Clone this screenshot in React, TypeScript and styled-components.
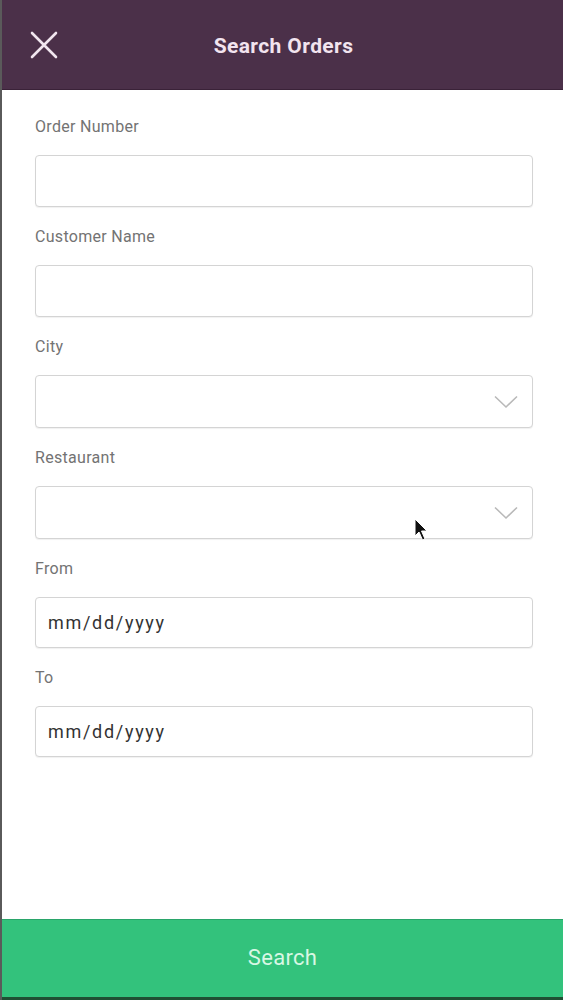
import { createGlobalStyle, styled } from "styled-components";

const GlobalStyle = createGlobalStyle`
  html, body {
    margin: 0;
    padding: 0;
    background: #ffffff;
  }
  body {
    font-family: Roboto, "Noto Sans", Arial, sans-serif;
  }
`;

type Kind = "text" | "select" | "date";

const fields: { label: string; kind: Kind }[] = [
  { label: "Order Number", kind: "text" },
  { label: "Customer Name", kind: "text" },
  { label: "City", kind: "select" },
  { label: "Restaurant", kind: "select" },
  { label: "From", kind: "date" },
  { label: "To", kind: "date" },
];

const boxHeight: Record<Kind, number> = { text: 52, select: 53, date: 51 };

const CloseIcon = () => (
  <svg width="28" height="28" viewBox="0 0 28 28">
    <path d="M2 2 L26 26 M26 2 L2 26" stroke="#f1e6ef" strokeWidth="2.6" strokeLinecap="round" />
  </svg>
);

const Chevron = () => (
  <svg width="24" height="14" viewBox="0 0 24 14">
    <path d="M1 1.5 L12 12 L23 1.5" fill="none" stroke="#b9b9b9" strokeWidth="1.6" />
  </svg>
);

const Pointer = () => (
  <svg width="16" height="24" viewBox="0 0 16 24">
    <path d="M1 1 L1 18 L5 14 L8.5 22 L11 21 L7.5 13 L13 13 Z" fill="#111" stroke="#fff" strokeWidth="1" />
  </svg>
);

const App = () => {
  return (
    <>
      <GlobalStyle />
      <Page>
        <Header>
          <CloseButton>
            <CloseIcon />
          </CloseButton>
          <Title>Search Orders</Title>
        </Header>
        <Form>
          {fields.map((f) => (
            <Field key={f.label}>
              <Label>{f.label}</Label>
              <Box $h={boxHeight[f.kind]}>
                {f.kind === "date" && <DateText>mm/dd/yyyy</DateText>}
                {f.kind === "select" && <Chevron />}
                {f.label === "Restaurant" && (
                  <Cursor>
                    <Pointer />
                  </Cursor>
                )}
              </Box>
            </Field>
          ))}
        </Form>
        <SearchButton>Search</SearchButton>
      </Page>
    </>
  );
};

const Page = styled.div`
  min-height: 100vh;
  display: flex;
  flex-direction: column;
  border-left: 2px solid #5a5a5a;
  box-sizing: border-box;
`;

const Header = styled.div`
  height: 90px;
  background: #4b3049;
  display: flex;
  align-items: center;
  justify-content: center;
  position: relative;
  border-bottom: 1px solid #3a2238;
  box-sizing: border-box;
`;

const CloseButton = styled.div`
  position: absolute;
  left: 28px;
  top: 31px;
  width: 28px;
  height: 28px;
`;

const Title = styled.div`
  color: #f2e4ef;
  font-size: 21px;
  font-weight: 700;
  letter-spacing: 0.4px;
  margin-left: 2px;
  margin-top: 2px;
`;

const Form = styled.div`
  flex: 1;
  display: flex;
  flex-direction: column;
  gap: 20px;
  padding: 27px 30px 0 33px;
`;

const Field = styled.div`
  display: flex;
  flex-direction: column;
`;

const Label = styled.div`
  height: 20px;
  line-height: 20px;
  font-size: 16px;
  letter-spacing: 0.3px;
  color: #737373;
  margin-bottom: 18px;
`;

const Box = styled.div<{ $h: number }>`
  position: relative;
  height: ${(p) => p.$h}px;
  box-sizing: border-box;
  border: 1.5px solid #d4d4d4;
  border-radius: 4px;
  background: #fff;
  box-shadow: 0 1px 1px rgba(0, 0, 0, 0.06);
  display: flex;
  align-items: center;
  justify-content: space-between;
  padding: 0 14px 0 12px;

  svg {
    margin-left: auto;
  }
`;

const DateText = styled.span`
  font-size: 18px;
  color: #333;
  letter-spacing: 1.7px;
`;

const Cursor = styled.div`
  position: absolute;
  left: 378px;
  top: 31px;
  width: 16px;
  height: 24px;

  svg {
    margin: 0;
  }
`;

const SearchButton = styled.div`
  height: 81px;
  background: #33c27c;
  border-top: 1px solid #2aa56a;
  border-bottom: 3px solid #1f4f33;
  box-sizing: border-box;
  display: flex;
  align-items: center;
  justify-content: center;
  color: #d8f7e4;
  font-size: 22px;
  letter-spacing: 0.3px;
  padding-bottom: 2px;
`;

export default App;
